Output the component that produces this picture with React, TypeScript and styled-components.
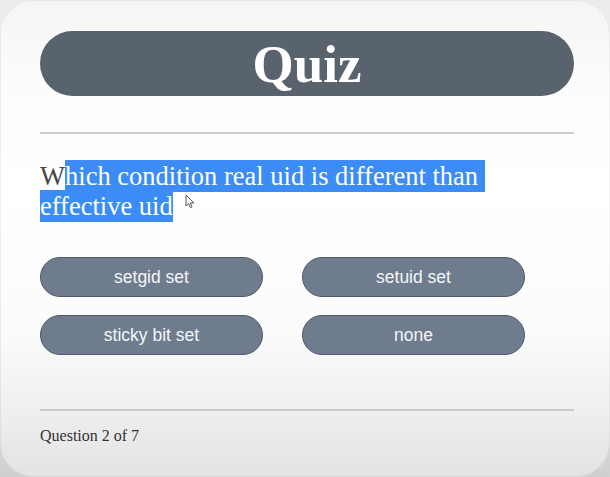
import React from "react";
import styled, { createGlobalStyle } from "styled-components";

const GlobalStyle = createGlobalStyle`
  html, body {
    margin: 0;
    padding: 0;
    background: linear-gradient(180deg, #ececec 0%, #f4f4f4 30%, #e6e6e6 80%, #cfcfcf 100%);
    min-height: 477px;
  }
  ::selection {
    background: #3b8cf6;
    color: #fff;
  }
`;

const Card = styled.div`
  box-sizing: border-box;
  width: 610px;
  height: 477px;
  border-radius: 34px;
  overflow: hidden;
  box-shadow: inset 0 0 0 1px rgba(0, 0, 0, 0.05);
  background: linear-gradient(
    180deg,
    #f5f5f5 0%,
    #fcfcfc 18%,
    #ffffff 40%,
    #fbfbfb 70%,
    #ededed 88%,
    #e3e3e3 100%
  );
  padding: 31px 36px 0 40px;
  display: flex;
  flex-direction: column;
`;

const TitleBar = styled.header`
  height: 65px;
  border-radius: 33px;
  background: #59636e;
  display: flex;
  align-items: center;
  justify-content: center;
`;

const Title = styled.h1`
  margin: 0;
  font-family: "Liberation Serif", "Times New Roman", serif;
  font-weight: 700;
  font-size: 53px;
  line-height: 1;
  color: #ffffff;
  padding-top: 2px;
`;

const Divider = styled.hr<{ $gap: number }>`
  margin: ${(p) => p.$gap}px 0 0 0;
  border: none;
  border-top: 2px solid #cbcbcb;
  height: 0;
`;

const Question = styled.p`
  position: relative;
  margin: 27px 0 0 0;
  width: 480px;
  font-family: "Liberation Serif", "Times New Roman", serif;
  font-size: 26.5px;
  line-height: 30px;
  color: #454545;
`;

const Highlight = styled.span`
  background: #3b8cf6;
  color: #ffffff;
  padding: 1px 0;
`;

const Pointer = styled.svg`
  position: absolute;
  left: 145px;
  top: 33px;
`;

const Options = styled.div`
  margin-top: 36px;
  display: grid;
  grid-template-columns: 223px 223px;
  grid-auto-rows: 40px;
  column-gap: 39px;
  row-gap: 18px;
`;

const OptionButton = styled.button`
  box-sizing: border-box;
  border: 1px solid #4e5967;
  border-radius: 20px;
  background: #6f7c8d;
  color: #f3f5f9;
  font-family: "Liberation Sans", Arial, sans-serif;
  font-size: 17.5px;
  padding: 0;
  cursor: pointer;
`;

const Footer = styled.p`
  margin: 16px 0 0 0;
  font-family: "Liberation Serif", "Times New Roman", serif;
  font-size: 16px;
  line-height: 18px;
  color: #333333;
`;

const options = ["setgid set", "setuid set", "sticky bit set", "none"];

export default function App() {
  return (
    <>
      <GlobalStyle />
      <Card>
        <TitleBar>
          <Title>Quiz</Title>
        </TitleBar>
        <Divider $gap={36} />
        <Question>
          W
          <Highlight>
            {"hich condition real uid is different than\u00a0"}
            <br />
            effective uid
          </Highlight>
          <Pointer width="11" height="15" viewBox="0 0 11 15">
            <path
              d="M1 1 L1 12 L3.6 9.6 L5.4 13.6 L7 12.9 L5.3 9 L9 9 Z"
              fill="#ffffff"
              stroke="#555"
              strokeWidth="1"
              strokeLinejoin="round"
            />
          </Pointer>
        </Question>
        <Options>
          {options.map((o) => (
            <OptionButton key={o}>{o}</OptionButton>
          ))}
        </Options>
        <Divider $gap={54} />
        <Footer>Question 2 of 7</Footer>
      </Card>
    </>
  );
}
